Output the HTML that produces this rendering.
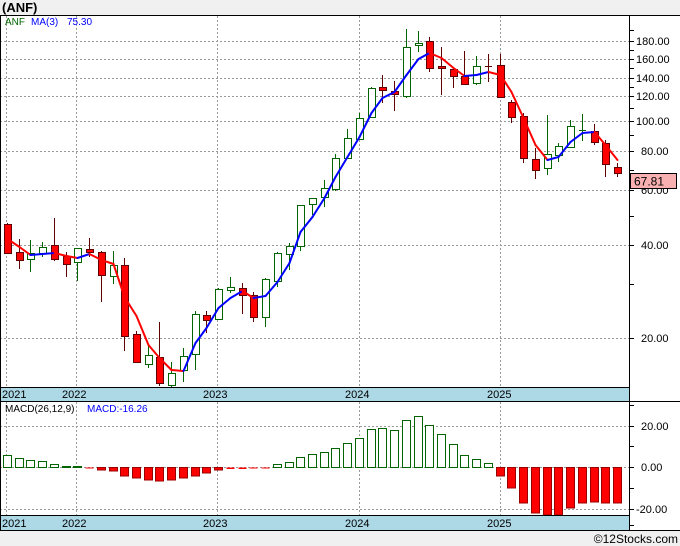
<!DOCTYPE html>
<html><head><meta charset="utf-8"><style>
body{margin:0;background:#fff;}
svg{display:block;font-family:"Liberation Sans",sans-serif;}
</style></head><body>
<svg id="s" width="680" height="546" viewBox="0 0 680 546" xmlns="http://www.w3.org/2000/svg">
<rect x="0" y="0" width="680" height="546" fill="#fff"/>
<rect x="0" y="0" width="680" height="15" fill="#f0f0f0"/>
<text x="2" y="12" font-size="13" font-weight="bold" fill="#000">(ANF)</text>
<rect x="0" y="530" width="680" height="16" fill="#f0f0f0"/>
<text x="678" y="543" font-size="12" text-anchor="end" fill="#000">©12Stocks.com</text>
<g id="grid" stroke="#999" stroke-width="1" stroke-dasharray="2,2"></g>
<g id="cand"></g>
<g id="ma" fill="none" stroke-width="2"></g>
<g id="macd"></g>
<rect x="0" y="387" width="629" height="14" fill="#add8e6"/>
<rect x="0" y="515" width="629" height="15" fill="#add8e6"/>
<g stroke="#000" stroke-width="1">
<line x1="0" y1="15.5" x2="680" y2="15.5"/>
<line x1="0.5" y1="15" x2="0.5" y2="530"/>
<line x1="629.5" y1="15" x2="629.5" y2="530"/>
<line x1="0" y1="387.5" x2="629" y2="387.5"/>
<line x1="0" y1="401.5" x2="680" y2="401.5"/>
<line x1="0" y1="515.5" x2="629" y2="515.5"/>
<line x1="0" y1="530.5" x2="680" y2="530.5"/>
</g>
<g id="ticks" stroke="#000"></g>
<g font-size="11" fill="#000">
<text x="2" y="398">2021</text><text x="62" y="398">2022</text><text x="203" y="398">2023</text><text x="345" y="398">2024</text><text x="487" y="398">2025</text>
<text x="2" y="527">2021</text><text x="62" y="527">2022</text><text x="203" y="527">2023</text><text x="345" y="527">2024</text><text x="487" y="527">2025</text>
<text x="636" y="45">180.00</text><text x="636" y="63">160.00</text><text x="636" y="82">140.00</text><text x="636" y="100">120.00</text><text x="636" y="125">100.00</text><text x="641" y="155">80.00</text><text x="641" y="194">60.00</text><text x="641" y="249">40.00</text><text x="641" y="342">20.00</text>
<text x="641" y="430">20.00</text><text x="641" y="471">0.00</text><text x="636" y="513">-20.00</text>
</g>
<rect x="630.5" y="173.5" width="46" height="15" fill="#f8b0b0" stroke="#000"/>
<text x="634" y="185.5" font-size="12" fill="#000">67.81</text>
<text x="5" y="25" font-size="10" fill="#006400">ANF</text>
<text x="31" y="25" font-size="10" fill="#0000ff">MA(3)</text>
<text x="67" y="25" font-size="10" fill="#0000ff">75.30</text>
<text x="5" y="412" font-size="10" fill="#000">MACD(26,12,9)</text>
<text x="87" y="412" font-size="10" fill="#0000ff">MACD:-16.26</text>
</svg>
<script>
var NS="http://www.w3.org/2000/svg";
function el(p,t,a){var e=document.createElementNS(NS,t);for(var k in a)e.setAttribute(k,a[k]);document.getElementById(p).appendChild(e);return e;}
// grid
[41,59,78,96,121,151,190,245,338].forEach(function(y){el("grid","line",{x1:0,y1:y+.5,x2:629,y2:y+.5});});
[426,467,509].forEach(function(y){el("grid","line",{x1:0,y1:y+.5,x2:629,y2:y+.5});});
[6,76,217,359,500].forEach(function(x){el("grid","line",{x1:x+.5,y1:16,x2:x+.5,y2:387});el("grid","line",{x1:x+.5,y1:402,x2:x+.5,y2:515});});
// ticks
[30,41,50,59,68,78,87,96,108,121,135,151,170,190,216,245,284,338].forEach(function(y){el("ticks","line",{x1:629,y1:y+.5,x2:634,y2:y+.5});});
[405,426,446,467,488,509,525].forEach(function(y){el("ticks","line",{x1:629,y1:y+.5,x2:634,y2:y+.5});});
// candles: [red?, bodyTop, bodyBot, wickHi, wickLo]
var C=[[1,224,253,223,253],[1,252,260,239,269],[0,253,259,240,272],[0,247,253,242,257],[1,245,259,218,261],[1,256,264,252,277],[0,248,262,248,281],[1,249,252,238,257],[1,252,275,251,302],[0,265,276,251,284],[1,265,336,258,351],[1,334,362,331,363],[0,355,364,345,368],[1,357,383,322,386],[0,373,385,362,387],[0,356,370,348,382],[0,314,354,311,370],[1,315,320,311,333],[0,289,319,288,320],[0,287,290,277,293],[1,288,295,283,314],[1,295,317,292,322],[0,279,317,278,327],[0,253,281,252,287],[0,246,254,243,270],
[0,205,246,205,251],[0,198,204,198,215],[0,188,197,180,207],[0,158,189,154,191],[0,138,158,129,158],[0,118,139,113,139],[0,88,117,87,118],[1,87,90,75,103],[1,91,94,81,111],[0,47,96,29,98],[0,43,45,31,52],[1,41,68,37,72],[1,66,68,47,95],[1,69,76,67,88],[1,76,84,51,84],[0,66,83,56,85],[2,66,66,54,82],[1,65,97,54,98],[1,102,117,100,123],[1,116,158,113,163],[1,159,170,148,179],[0,154,168,115,175],[0,146,155,143,162],[0,126,147,120,147],[3,130,130,114,141],[1,131,142,124,145],[1,143,164,140,177],[1,167,173,163,177]];
function X(i){return Math.round(7+11.73*i);}
C.forEach(function(c,i){var x=X(i);var r=c[0]==1||c[0]==2;var wc=r?"#600000":"#006400";
el("cand","line",{x1:x+.5,y1:c[3],x2:x+.5,y2:c[4],stroke:wc});
if(c[1]==c[2]){el("cand","line",{x1:x-3,y1:c[1]+.5,x2:x+4,y2:c[1]+.5,stroke:wc});}
else el("cand","rect",{x:x-3+.5,y:c[1]+.5,width:7,height:c[2]-c[1],fill:c[0]==1?"#ff0000":"#fff",stroke:wc});
});
// MA
var M=[239,247,255,254,253,256,258,254,260,264,297,316,345,358,370,371,343,328,308,298,291,298,296,282,263,232,217,198,177,157,137,113,98,92,75,59,53,58,68,76,75,72,75,92,118,145,160,157,142,133,132,145,160];
for(var i=0;i<M.length-1;i++){el("ma","line",{x1:X(i)+.5,y1:M[i],x2:X(i+1)+.5,y2:M[i+1],stroke:M[i+1]>M[i]?"#ff0000":"#0000ff","stroke-linecap":"round"});}
// MACD
var D=[455,458,460,461,464,466,466,467,470,471,476,478,480,481,480,478,476,473,470,469,469,468,467,464,462,457,454,452,448,443,438,429,428,430,420,416,425,434,444,455,459,463,476,488,503,513,515,515,508,503,502,503,503];
D.forEach(function(y,i){var x=X(i);var b=467.5;if(y<467){el("macd","rect",{x:x-3.5,y:y+.5,width:8,height:b-y-.5,fill:"#fff",stroke:"#006400"});}else{el("macd","rect",{x:x-3.5,y:b,width:8,height:Math.max(1,y-b),fill:"#ff0000",stroke:"#990000","stroke-width":y-b>2?1:0});}});
</script>
</body></html>
